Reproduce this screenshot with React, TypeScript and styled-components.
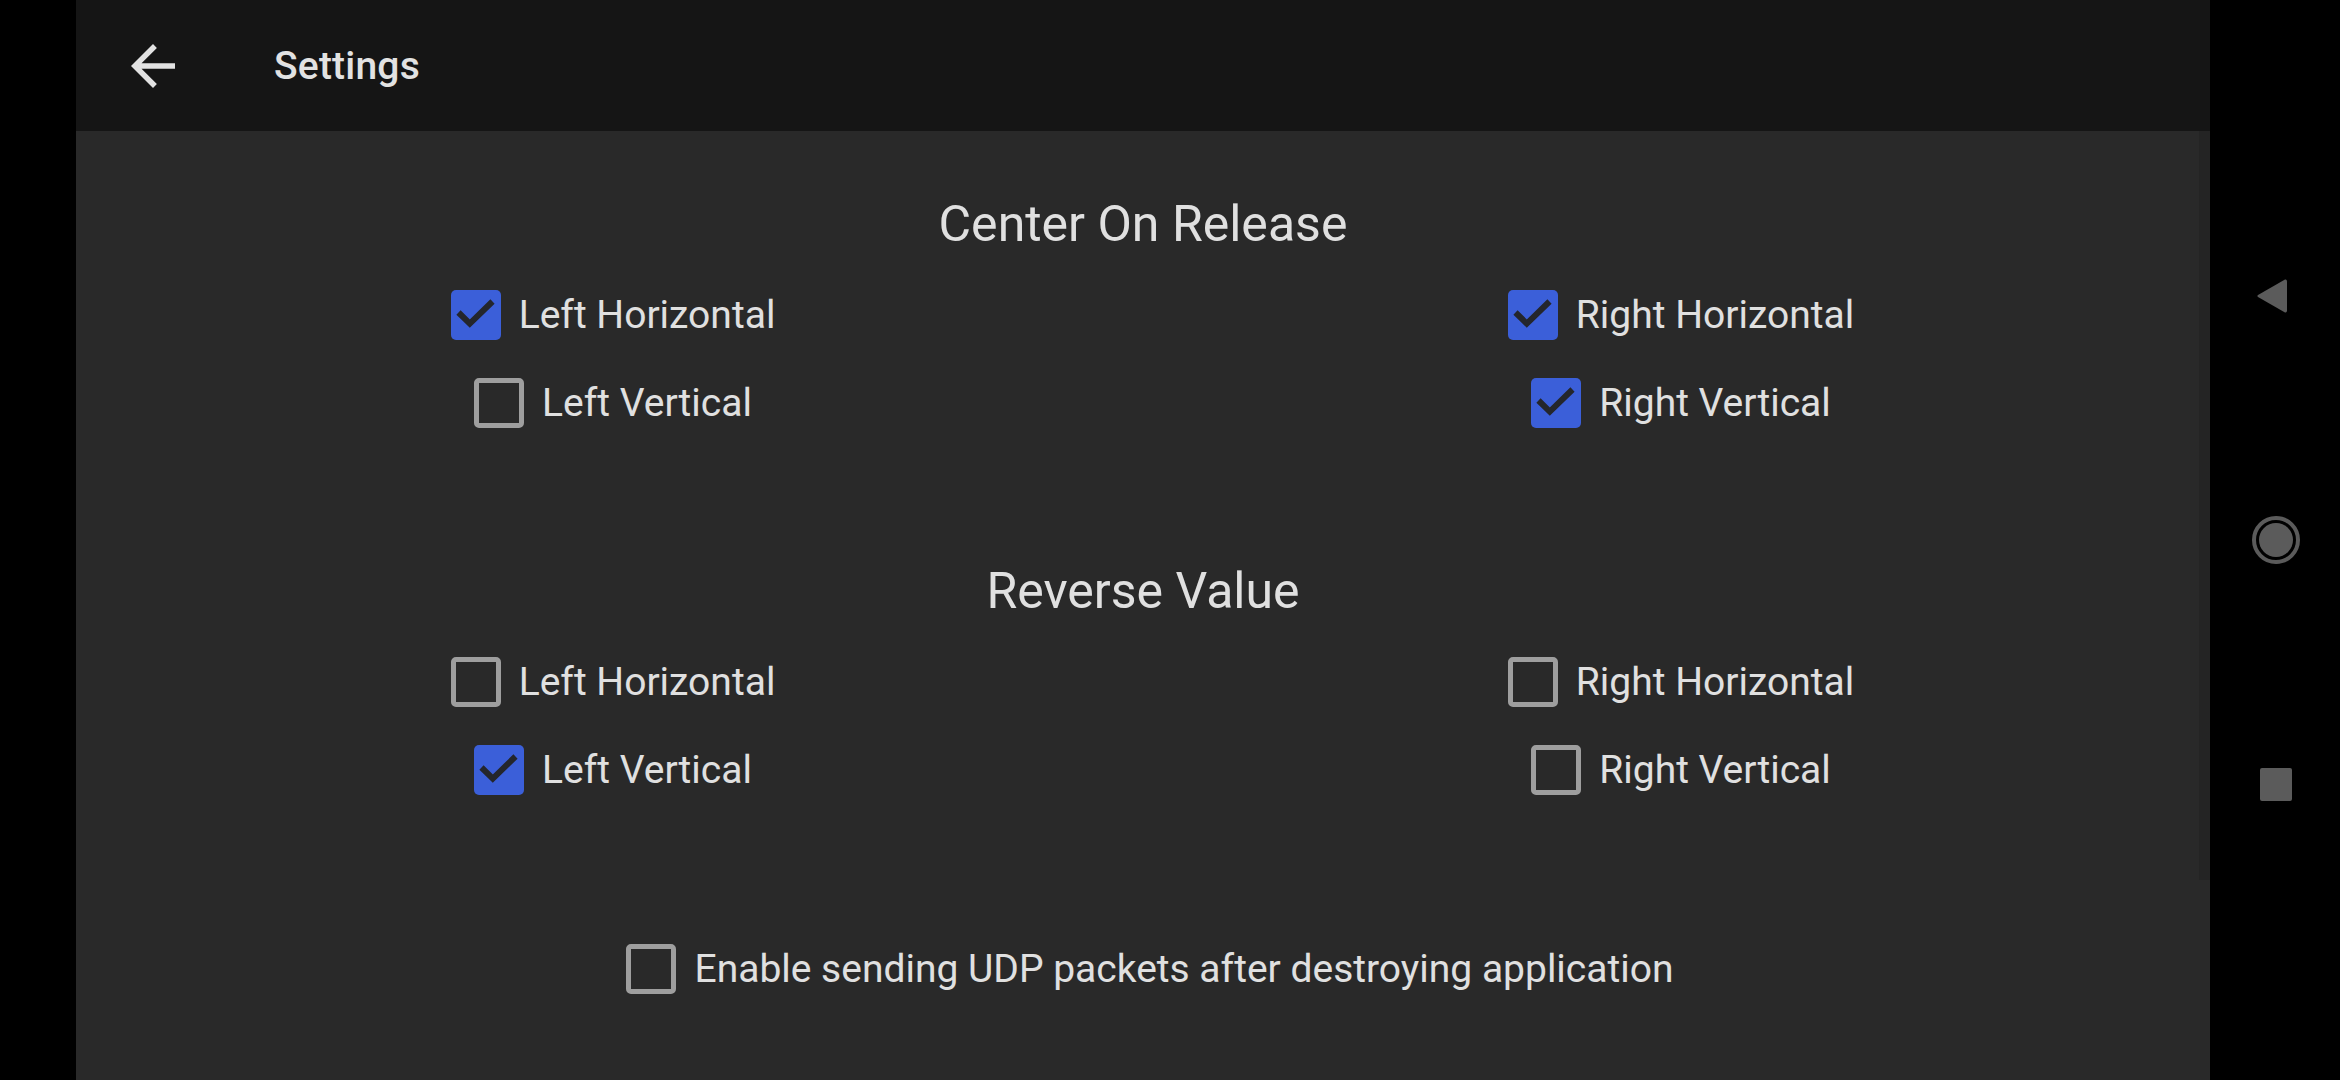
import React from "react";
import styled, { createGlobalStyle } from "styled-components";

const GlobalStyle = createGlobalStyle`
  html, body {
    margin: 0;
    padding: 0;
    background: #000;
  }
  body {
    font-family: Roboto, "Liberation Sans", sans-serif;
  }
`;

const Screen = styled.div`
  display: flex;
  flex-direction: row;
  width: 2340px;
  height: 1080px;
  background: #000;
  overflow: hidden;
`;

const Cutout = styled.div`
  width: 76px;
  flex-shrink: 0;
  background: #000;
`;

const Main = styled.div`
  display: flex;
  flex-direction: column;
  width: 2134px;
  flex-shrink: 0;
`;

const Toolbar = styled.div`
  display: flex;
  align-items: center;
  height: 131px;
  flex-shrink: 0;
  background: #151515;
  padding-left: 44px;
`;

const BackButton = styled.div`
  display: flex;
  width: 66px;
  height: 66px;
  color: #e2e2e2;
`;

const ToolbarTitle = styled.div`
  margin-left: 88px;
  font-size: 39px;
  font-weight: 500;
  color: #e2e2e2;
  letter-spacing: 0.2px;
`;

const Content = styled.div`
  position: relative;
  flex: 1;
  display: flex;
  flex-direction: column;
  background: #292929;
  padding-top: 63px;
`;

const ScrollThumb = styled.div`
  position: absolute;
  top: 0;
  right: 0;
  width: 11px;
  height: 749px;
  background: #242424;
`;

const SectionTitle = styled.div<{ $gap: number }>`
  margin-top: ${(p) => p.$gap}px;
  height: 60px;
  line-height: 60px;
  font-size: 50px;
  color: #e0e0e0;
  text-align: center;
`;

const Columns = styled.div`
  display: grid;
  grid-template-columns: 1068px 1068px;
  margin-top: 17px;
  margin-left: 3px;
`;

const Column = styled.div`
  display: flex;
  flex-direction: column;
  align-items: center;
`;

const Row = styled.div<{ $gap?: number }>`
  display: flex;
  align-items: center;
  gap: 18px;
  height: 88px;
  margin-top: ${(p) => p.$gap ?? 0}px;
`;

const CenterRow = styled(Row)`
  align-self: center;
  margin-left: 14px;
`;

const Box = styled.div<{ $checked: boolean }>`
  box-sizing: border-box;
  width: 50px;
  height: 50px;
  border-radius: 5px;
  flex-shrink: 0;
  display: flex;
  background: ${(p) => (p.$checked ? "#3b5fd9" : "transparent")};
  border: ${(p) => (p.$checked ? "none" : "5px solid #9e9e9e")};
`;

const Label = styled.span`
  font-size: 39px;
  color: #e0e0e0;
  line-height: 50px;
  white-space: nowrap;
`;

const NavBar = styled.div`
  flex: 1;
  display: flex;
  flex-direction: column;
  justify-content: center;
  align-items: center;
  background: #000;
  padding-left: 1px;
`;

const NavSlot = styled.div<{ $shift?: number }>`
  height: 244px;
  display: flex;
  align-items: center;
  justify-content: center;
  margin-right: ${(p) => p.$shift ?? 0}px;
`;

const NavSquare = styled.div`
  width: 32px;
  height: 33px;
  border-radius: 2px;
  background: #5b5b5b;
`;

function Check({ checked, label }: { checked: boolean; label: string }) {
  return (
    <>
      <Box $checked={checked}>
        {checked && (
          <svg width="50" height="50" viewBox="0 0 50 50">
            <path
              d="M7.5 22.5 L18.8 33.6 L41.5 11.5"
              fill="none"
              stroke="#24262c"
              strokeWidth="6"
            />
          </svg>
        )}
      </Box>
      <Label>{label}</Label>
    </>
  );
}

function Section({
  title,
  gap,
  values,
}: {
  title: string;
  gap: number;
  values: [boolean, boolean, boolean, boolean];
}) {
  return (
    <>
      <SectionTitle $gap={gap}>{title}</SectionTitle>
      <Columns>
        <Column>
          <Row>
            <Check checked={values[0]} label="Left Horizontal" />
          </Row>
          <Row>
            <Check checked={values[1]} label="Left Vertical" />
          </Row>
        </Column>
        <Column>
          <Row>
            <Check checked={values[2]} label="Right Horizontal" />
          </Row>
          <Row>
            <Check checked={values[3]} label="Right Vertical" />
          </Row>
        </Column>
      </Columns>
    </>
  );
}

export default function App() {
  return (
    <Screen>
      <GlobalStyle />
      <Cutout />
      <Main>
        <Toolbar>
          <BackButton>
            <svg width="66" height="66" viewBox="0 0 24 24">
              <path
                fill="currentColor"
                d="M20 11H7.83l5.59-5.59L12 4l-8 8 8 8 1.41-1.41L7.83 13H20v-2z"
              />
            </svg>
          </BackButton>
          <ToolbarTitle>Settings</ToolbarTitle>
        </Toolbar>
        <Content>
          <ScrollThumb />
          <Section title="Center On Release" gap={0} values={[true, false, true, true]} />
          <Section title="Reverse Value" gap={114} values={[false, true, false, false]} />
          <CenterRow $gap={110.5}>
            <Check checked={false} label="Enable sending UDP packets after destroying application" />
          </CenterRow>
        </Content>
      </Main>
      <NavBar>
        <NavSlot $shift={8}>
          <svg width="34" height="38" viewBox="0 0 34 38">
            <path
              d="M30 2.5 Q32 2 32 4.5 L32 33.5 Q32 36 30 35.5 L3 20 Q1.5 19 3 18 Z"
              fill="#5b5b5b"
            />
          </svg>
        </NavSlot>
        <NavSlot>
          <svg width="50" height="50" viewBox="0 0 50 50">
            <circle cx="25" cy="25" r="22" fill="none" stroke="#5b5b5b" strokeWidth="4" />
            <circle cx="25" cy="25" r="17" fill="#5b5b5b" />
          </svg>
        </NavSlot>
        <NavSlot>
          <NavSquare />
        </NavSlot>
      </NavBar>
    </Screen>
  );
}
